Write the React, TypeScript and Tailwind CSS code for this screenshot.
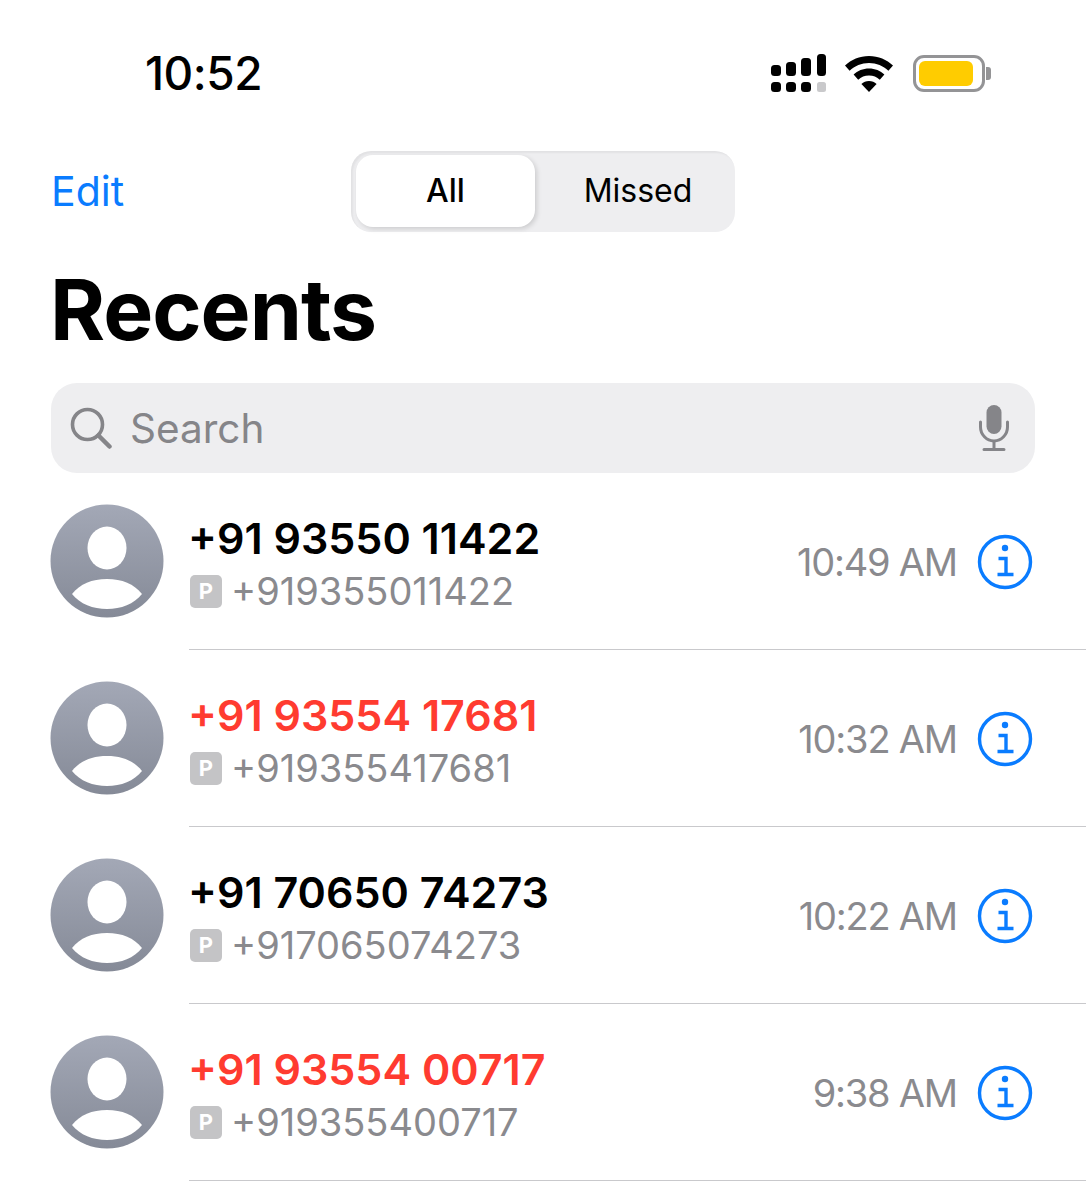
import React from 'react';

const calls = [
  { name: '+91 93550 11422', number: '+919355011422', time: '10:49 AM', missed: false },
  { name: '+91 93554 17681', number: '+919355417681', time: '10:32 AM', missed: true },
  { name: '+91 70650 74273', number: '+917065074273', time: '10:22 AM', missed: false },
  { name: '+91 93554 00717', number: '+919355400717', time: '9:38 AM', missed: true },
];

const SignalIcon = () => (
  <svg width="56" height="40" viewBox="0 0 56 40" fill="#000">
    <rect x="0" y="11" width="10" height="11" rx="3.5" />
    <rect x="15" y="8" width="10" height="14" rx="3.5" />
    <rect x="30" y="4" width="10" height="18" rx="3.5" />
    <rect x="46" y="0" width="9" height="22" rx="3.5" />
    <rect x="0" y="28" width="10" height="10" rx="3.5" />
    <rect x="15" y="28" width="10" height="10" rx="3.5" />
    <rect x="30" y="28" width="10" height="10" rx="3.5" />
    <rect x="46" y="28" width="9" height="10" rx="2.5" fill="#c9c9cb" />
  </svg>
);

const WifiIcon = () => (
  <svg width="50" height="36" viewBox="0 0 50 36" fill="#000">
    <path d="M25 0C15.5 0 7.3 3.7 1 9.6l4.6 5.2C10.7 10 17.5 7 25 7s14.3 3 19.4 7.8L49 9.6C42.7 3.7 34.500 0 25 0z" />
    <path d="M25 12.500c-6 0-11.400 2.300-15.400 6l4.600 5.200c2.800-2.600 6.600-4.200 10.800-4.200s8 1.600 10.800 4.200l4.600-5.200c-4-3.700-9.400-6-15.400-6z" />
    <path d="M25 25c-3 0-5.600 1.100-7.600 2.900L25 36l7.600-8.100C30.600 26.100 28 25 25 25z" />
  </svg>
);

const BatteryIcon = () => (
  <div className="flex items-center gap-[1px]">
    <div className="w-[72px] h-[37px] rounded-[11px] border-[3px] border-[#949496] p-[3px]">
      <div className="w-[54px] h-full rounded-[6px] bg-[#ffcc00]" />
    </div>
    <div className="w-[5px] h-[13px] rounded-r-[3px] bg-[#949496]" />
  </div>
);

const SearchIcon = () => (
  <svg width="42" height="42" viewBox="0 0 42 42" fill="none" stroke="#858589" strokeWidth="3.6" strokeLinecap="round">
    <circle cx="17.500" cy="17.500" r="15" />
    <path d="M28.500 28.500L39.500 39.500" strokeWidth="4.5" />
  </svg>
);

const MicIcon = () => (
  <svg width="32" height="46" viewBox="0 0 32 46" fill="none" stroke="#858589" strokeWidth="3" strokeLinecap="round">
    <rect x="8.500" y="0" width="15" height="29" rx="7.500" fill="#858589" stroke="none" />
    <path d="M2.500 17v5c0 7.500 6 14 13.500 14s13.500-6.500 13.500-14v-5" />
    <path d="M16 36.500V44M6 44.500h20" />
  </svg>
);

const Avatar = ({ id }: { id: string }) => (
  <svg width="114" height="114" viewBox="0 0 114 114" className="shrink-0 mb-[2px]">
    <defs>
      <linearGradient id={id} x1="0" y1="0" x2="0" y2="1">
        <stop offset="0" stopColor="#a3a8b6" />
        <stop offset="1" stopColor="#858a97" />
      </linearGradient>
    </defs>
    <circle cx="57" cy="57" r="56.500" fill={`url(#${id})`} />
    <ellipse cx="57" cy="44" rx="19.500" ry="21.500" fill="#fff" />
    <path d="M22 90C30 80 42 75 57 75s27 5 35 15c-8 10-21 15-35 15s-27-5-35-15z" fill="#fff" />
  </svg>
);

const InfoIcon = () => (
  <svg width="56" height="56" viewBox="0 0 56 56" fill="none" stroke="#0a7cff" className="shrink-0">
    <circle cx="28" cy="28" r="25.500" strokeWidth="3.400" />
    <circle cx="28" cy="14" r="3.200" fill="#0a7cff" stroke="none" />
    <path d="M21.500 24.500h7.500v16M20.500 40.500h16" strokeWidth="3.400" />
  </svg>
);

export default function App() {
  return (
    <div className="w-[1086px] h-[1200px] bg-white overflow-hidden font-['Inter',sans-serif] text-black">
      {/* Status bar */}
      <div className="h-[149px] pt-[46px] pl-[145px] pr-[95px] flex justify-between items-start">
        <span className="text-[46px] leading-[54px] font-medium tracking-[-0.5px]">10:52</span>
        <div className="flex items-center pt-[7px]">
          <div className="mt-[1px]"><SignalIcon /></div>
          <div className="ml-[17px]"><WifiIcon /></div>
          <div className="ml-[19px]"><BatteryIcon /></div>
        </div>
      </div>

      {/* Nav */}
      <div className="relative h-[85px] pl-[51px] flex items-center">
        <span className="w-[300px] text-[41px] leading-none text-[#0a7cff]">Edit</span>
        <div className="w-[384px] h-[81px] flex rounded-[20px] bg-[#eeeef0] pt-[4px] pb-[5px] pl-[5px] pr-[4px] shadow-[inset_2px_2px_2px_rgba(0,0,0,0.05)]">
          <div className="w-[179px] rounded-[17px] bg-white shadow-[2px_2px_5px_rgba(0,0,0,0.14)] flex items-center justify-center text-[32px] font-medium">All</div>
          <div className="flex-1 flex items-center justify-center text-[32px] pl-[10px]">Missed</div>
        </div>
      </div>

      <h1 className="pl-[50px] mt-[32px] text-[84px] leading-[88px] font-bold tracking-[-1px]">Recents</h1>

      {/* Search */}
      <div className="mx-[51px] w-[984px] h-[90px] mt-[29px] rounded-[26px] bg-[#eeeef0] pl-[19px] pr-[25px] flex items-center">
        <SearchIcon />
        <span className="ml-[18px] mt-[2px] text-[40.5px] leading-none text-[#858589] flex-1">Search</span>
        <MicIcon />
      </div>

      {/* Calls */}
      <div>
        {calls.map((c, i) => (
          <div key={c.number} className="h-[177px] pl-[50px] flex items-center">
            <Avatar id={`avatar-${i}`} />
            <div className="ml-[25px] flex-1 h-full border-b border-[#c9c9cc] flex items-center pr-[53px]">
              <div className="flex-1 pt-[6px]">
                <div className={`-ml-[1px] text-[43px] leading-[52px] font-semibold ${c.missed ? 'text-[#ff3b30]' : 'text-black'}`}>{c.name}</div>
                <div className="flex items-center mt-[2px]">
                  <span className="ml-[1px] w-[32px] h-[33px] rounded-[5px] bg-[#c4c4c6] text-white text-[22px] font-bold flex items-center justify-center">P</span>
                  <span className="ml-[9px] text-[38px] leading-[50px] text-[#8a8a8e]">{c.number}</span>
                </div>
              </div>
              <span className="text-[38px] leading-none text-[#8a8a8e] mr-[20px] mt-[2px] tracking-[-1.2px]">{c.time}</span>
              <div className="mt-[2px]"><InfoIcon /></div>
            </div>
          </div>
        ))}
      </div>
    </div>
  );
}
